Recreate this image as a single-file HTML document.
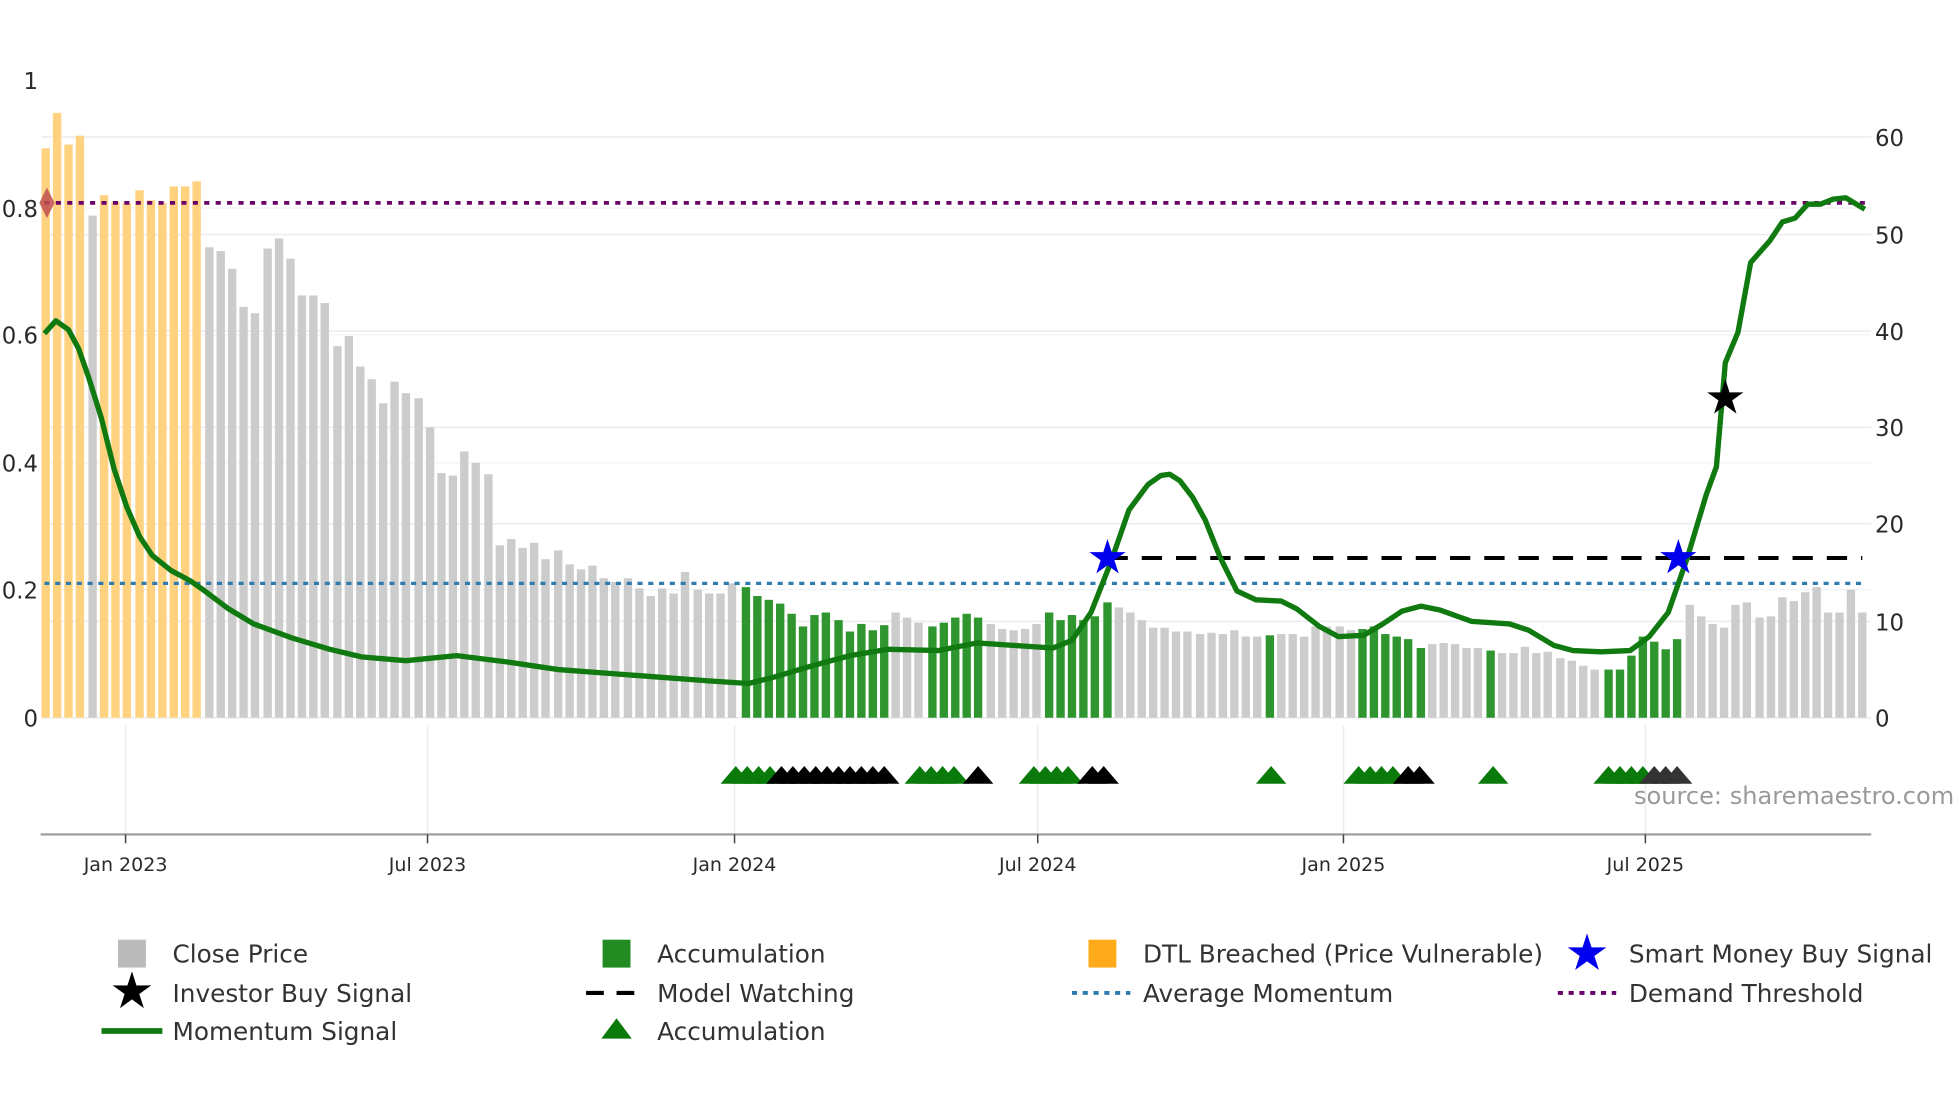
<!DOCTYPE html>
<html><head><meta charset="utf-8"><style>
html,body{margin:0;padding:0;background:#fff;}
svg{display:block;font-family:"DejaVu Sans","Liberation Sans",sans-serif;}
.o{fill:#ffd280}.g{fill:#cccccc}.a{fill:#2f962f}
</style></head><body>
<svg width="1960" height="1102" viewBox="0 0 1545 869" preserveAspectRatio="none" xmlns="http://www.w3.org/2000/svg">
<defs>
<path id="st" d="M0,-1 L0.223,-0.307 L0.951,-0.309 L0.361,0.117 L0.588,0.809 L0,0.38 L-0.588,0.809 L-0.361,0.117 L-0.951,-0.309 L-0.223,-0.307Z"/>
<path id="tr" d="M-12,618 L0,604 L12,618Z"/>
</defs>
<rect width="1545" height="869" fill="#fff"/>
<!-- grid -->
<g stroke="#ececf0" stroke-width="1.2">
<line x1="33" x2="1475" y1="108" y2="108"/><line x1="33" x2="1475" y1="185" y2="185"/>
<line x1="33" x2="1475" y1="261" y2="261"/><line x1="33" x2="1475" y1="337" y2="337"/>
<line x1="33" x2="1475" y1="413" y2="413"/><line x1="33" x2="1475" y1="490" y2="490"/>
<line x1="33" x2="1475" y1="164" y2="164" stroke="#f4f4f6"/><line x1="33" x2="1475" y1="264" y2="264" stroke="#f4f4f6"/>
<line x1="33" x2="1475" y1="365" y2="365" stroke="#f4f4f6"/><line x1="33" x2="1475" y1="465" y2="465" stroke="#f4f4f6"/>
<line x1="33" x2="1475" y1="566" y2="566"/>
<line x1="99" x2="99" y1="572" y2="658"/><line x1="337" x2="337" y1="572" y2="658"/>
<line x1="579" x2="579" y1="572" y2="658"/><line x1="818" x2="818" y1="572" y2="658"/>
<line x1="1059" x2="1059" y1="572" y2="658"/><line x1="1297" x2="1297" y1="572" y2="658"/>
</g>
<!-- bars -->
<g>
<rect class="o" x="32.7" y="117" width="6.6" height="449"/><rect class="o" x="41.7" y="89" width="6.6" height="477"/><rect class="o" x="50.7" y="114" width="6.6" height="452"/><rect class="o" x="59.7" y="107" width="6.6" height="459"/>
<rect class="g" x="69.7" y="170" width="6.6" height="396"/>
<rect class="o" x="78.7" y="154" width="6.6" height="412"/><rect class="o" x="87.7" y="159" width="6.6" height="407"/><rect class="o" x="96.7" y="160" width="6.6" height="406"/><rect class="o" x="106.7" y="150" width="6.6" height="416"/><rect class="o" x="115.7" y="158" width="6.6" height="408"/><rect class="o" x="124.7" y="160" width="6.6" height="406"/><rect class="o" x="133.7" y="147" width="6.6" height="419"/><rect class="o" x="142.7" y="147" width="6.6" height="419"/><rect class="o" x="151.7" y="143" width="6.6" height="423"/>
<rect class="g" x="161.7" y="195" width="6.6" height="371"/><rect class="g" x="170.7" y="198" width="6.6" height="368"/><rect class="g" x="179.7" y="212" width="6.6" height="354"/><rect class="g" x="188.7" y="242" width="6.6" height="324"/><rect class="g" x="197.7" y="247" width="6.6" height="319"/><rect class="g" x="207.7" y="196" width="6.6" height="370"/><rect class="g" x="216.7" y="188" width="6.6" height="378"/><rect class="g" x="225.7" y="204" width="6.6" height="362"/><rect class="g" x="234.7" y="233" width="6.6" height="333"/><rect class="g" x="243.7" y="233" width="6.6" height="333"/><rect class="g" x="252.7" y="239" width="6.6" height="327"/><rect class="g" x="262.7" y="273" width="6.6" height="293"/><rect class="g" x="271.7" y="265" width="6.6" height="301"/><rect class="g" x="280.7" y="289" width="6.6" height="277"/><rect class="g" x="289.7" y="299" width="6.6" height="267"/><rect class="g" x="298.7" y="318" width="6.6" height="248"/><rect class="g" x="307.7" y="301" width="6.6" height="265"/><rect class="g" x="316.7" y="310" width="6.6" height="256"/><rect class="g" x="326.7" y="314" width="6.6" height="252"/><rect class="g" x="335.7" y="337" width="6.6" height="229"/><rect class="g" x="344.7" y="373" width="6.6" height="193"/><rect class="g" x="353.7" y="375" width="6.6" height="191"/><rect class="g" x="362.7" y="356" width="6.6" height="210"/><rect class="g" x="371.7" y="365" width="6.6" height="201"/><rect class="g" x="381.7" y="374" width="6.6" height="192"/><rect class="g" x="390.7" y="430" width="6.6" height="136"/><rect class="g" x="399.7" y="425" width="6.6" height="141"/><rect class="g" x="408.7" y="432" width="6.6" height="134"/><rect class="g" x="417.7" y="428" width="6.6" height="138"/><rect class="g" x="426.7" y="441" width="6.6" height="125"/><rect class="g" x="436.7" y="434" width="6.6" height="132"/><rect class="g" x="445.7" y="445" width="6.6" height="121"/><rect class="g" x="454.7" y="449" width="6.6" height="117"/><rect class="g" x="463.7" y="446" width="6.6" height="120"/><rect class="g" x="472.7" y="456" width="6.6" height="110"/><rect class="g" x="481.7" y="459" width="6.6" height="107"/><rect class="g" x="491.7" y="456" width="6.6" height="110"/><rect class="g" x="500.7" y="464" width="6.6" height="102"/><rect class="g" x="509.7" y="470" width="6.6" height="96"/><rect class="g" x="518.7" y="464" width="6.6" height="102"/><rect class="g" x="527.7" y="468" width="6.6" height="98"/><rect class="g" x="536.7" y="451" width="6.6" height="115"/><rect class="g" x="546.7" y="465" width="6.6" height="101"/><rect class="g" x="555.7" y="468" width="6.6" height="98"/><rect class="g" x="564.7" y="468" width="6.6" height="98"/><rect class="g" x="573.7" y="460" width="6.6" height="106"/>
<rect class="a" x="584.7" y="463" width="6.6" height="103"/><rect class="a" x="593.7" y="470" width="6.6" height="96"/><rect class="a" x="602.7" y="473" width="6.6" height="93"/><rect class="a" x="611.7" y="476" width="6.6" height="90"/><rect class="a" x="620.7" y="484" width="6.6" height="82"/><rect class="a" x="629.7" y="494" width="6.6" height="72"/><rect class="a" x="638.7" y="485" width="6.6" height="81"/><rect class="a" x="647.7" y="483" width="6.6" height="83"/><rect class="a" x="657.7" y="489" width="6.6" height="77"/><rect class="a" x="666.7" y="498" width="6.6" height="68"/><rect class="a" x="675.7" y="492" width="6.6" height="74"/><rect class="a" x="684.7" y="497" width="6.6" height="69"/><rect class="a" x="693.7" y="493" width="6.6" height="73"/>
<rect class="g" x="702.7" y="483" width="6.6" height="83"/><rect class="g" x="711.7" y="487" width="6.6" height="79"/><rect class="g" x="720.7" y="491" width="6.6" height="75"/>
<rect class="a" x="731.7" y="494" width="6.6" height="72"/><rect class="a" x="740.7" y="491" width="6.6" height="75"/><rect class="a" x="749.7" y="487" width="6.6" height="79"/><rect class="a" x="758.7" y="484" width="6.6" height="82"/><rect class="a" x="767.7" y="487" width="6.6" height="79"/>
<rect class="g" x="777.7" y="492" width="6.6" height="74"/><rect class="g" x="786.7" y="496" width="6.6" height="70"/><rect class="g" x="795.7" y="497" width="6.6" height="69"/><rect class="g" x="804.7" y="496" width="6.6" height="70"/><rect class="g" x="813.7" y="492" width="6.6" height="74"/>
<rect class="a" x="823.7" y="483" width="6.6" height="83"/><rect class="a" x="832.7" y="489" width="6.6" height="77"/><rect class="a" x="841.7" y="485" width="6.6" height="81"/><rect class="a" x="850.7" y="489" width="6.6" height="77"/><rect class="a" x="859.7" y="486" width="6.6" height="80"/><rect class="a" x="869.7" y="475" width="6.6" height="91"/>
<rect class="g" x="878.7" y="479" width="6.6" height="87"/><rect class="g" x="887.7" y="483" width="6.6" height="83"/><rect class="g" x="896.7" y="489" width="6.6" height="77"/><rect class="g" x="905.7" y="495" width="6.6" height="71"/><rect class="g" x="914.7" y="495" width="6.6" height="71"/><rect class="g" x="923.7" y="498" width="6.6" height="68"/><rect class="g" x="932.7" y="498" width="6.6" height="68"/><rect class="g" x="942.7" y="500" width="6.6" height="66"/><rect class="g" x="951.7" y="499" width="6.6" height="67"/><rect class="g" x="960.7" y="500" width="6.6" height="66"/><rect class="g" x="969.7" y="497" width="6.6" height="69"/><rect class="g" x="978.7" y="502" width="6.6" height="64"/><rect class="g" x="987.7" y="502" width="6.6" height="64"/>
<rect class="a" x="997.7" y="501" width="6.6" height="65"/>
<rect class="g" x="1006.7" y="500" width="6.6" height="66"/><rect class="g" x="1015.7" y="500" width="6.6" height="66"/><rect class="g" x="1024.7" y="502" width="6.6" height="64"/><rect class="g" x="1033.7" y="494" width="6.6" height="72"/><rect class="g" x="1042.7" y="494" width="6.6" height="72"/><rect class="g" x="1052.7" y="494" width="6.6" height="72"/><rect class="g" x="1061.7" y="497" width="6.6" height="69"/>
<rect class="a" x="1070.7" y="496" width="6.6" height="70"/><rect class="a" x="1079.7" y="494" width="6.6" height="72"/><rect class="a" x="1088.7" y="500" width="6.6" height="66"/><rect class="a" x="1097.7" y="502" width="6.6" height="64"/><rect class="a" x="1106.7" y="504" width="6.6" height="62"/><rect class="a" x="1116.7" y="511" width="6.6" height="55"/>
<rect class="g" x="1125.7" y="508" width="6.6" height="58"/><rect class="g" x="1134.7" y="507" width="6.6" height="59"/><rect class="g" x="1143.7" y="508" width="6.6" height="58"/><rect class="g" x="1152.7" y="511" width="6.6" height="55"/><rect class="g" x="1161.7" y="511" width="6.6" height="55"/>
<rect class="a" x="1171.7" y="513" width="6.6" height="53"/>
<rect class="g" x="1180.7" y="515" width="6.6" height="51"/><rect class="g" x="1189.7" y="515" width="6.6" height="51"/><rect class="g" x="1198.7" y="510" width="6.6" height="56"/><rect class="g" x="1207.7" y="515" width="6.6" height="51"/><rect class="g" x="1216.7" y="514" width="6.6" height="52"/><rect class="g" x="1226.7" y="519" width="6.6" height="47"/><rect class="g" x="1235.7" y="521" width="6.6" height="45"/><rect class="g" x="1244.7" y="525" width="6.6" height="41"/><rect class="g" x="1253.7" y="528" width="6.6" height="38"/>
<rect class="a" x="1264.7" y="528" width="6.6" height="38"/><rect class="a" x="1273.7" y="528" width="6.6" height="38"/><rect class="a" x="1282.7" y="517" width="6.6" height="49"/><rect class="a" x="1291.7" y="502" width="6.6" height="64"/><rect class="a" x="1300.7" y="506" width="6.6" height="60"/><rect class="a" x="1309.7" y="512" width="6.6" height="54"/><rect class="a" x="1318.7" y="504" width="6.6" height="62"/>
<rect class="g" x="1328.7" y="477" width="6.6" height="89"/><rect class="g" x="1337.7" y="486" width="6.6" height="80"/><rect class="g" x="1346.7" y="492" width="6.6" height="74"/><rect class="g" x="1355.7" y="495" width="6.6" height="71"/><rect class="g" x="1364.7" y="477" width="6.6" height="89"/><rect class="g" x="1373.7" y="475" width="6.6" height="91"/><rect class="g" x="1383.7" y="487" width="6.6" height="79"/><rect class="g" x="1392.7" y="486" width="6.6" height="80"/><rect class="g" x="1401.7" y="471" width="6.6" height="95"/><rect class="g" x="1410.7" y="474" width="6.6" height="92"/><rect class="g" x="1419.7" y="467" width="6.6" height="99"/><rect class="g" x="1428.7" y="463" width="6.6" height="103"/><rect class="g" x="1437.7" y="483" width="6.6" height="83"/><rect class="g" x="1446.7" y="483" width="6.6" height="83"/><rect class="g" x="1455.7" y="465" width="6.6" height="101"/><rect class="g" x="1464.7" y="483" width="6.6" height="83"/>
</g>
<!-- horizontal reference lines -->
<line x1="35" x2="1470" y1="160" y2="160" stroke="#6a006a" stroke-width="3" stroke-dasharray="4,5"/>
<line x1="35" x2="1470" y1="460" y2="460" stroke="#2e7bb0" stroke-width="2.6" stroke-dasharray="4,4.5"/>
<line x1="873" x2="1468" y1="440" y2="440" stroke="#000" stroke-width="3.2" stroke-dasharray="16,11"/>
<path d="M37,148 L31,160 L37,172 L43,160Z" fill="#c0504d" opacity="0.85"/>
<!-- momentum line -->
<polyline fill="none" stroke="#107a10" stroke-width="4.2" stroke-linejoin="round" points="35,263 44,253 54,260 62,275 70,298 80,330 90,370 100,400 110,423 120,438 135,450 150,458 160,465 180,480 200,492 230,503 260,512 285,518 320,521 360,517 400,522 440,528 480,531 520,534 560,537 590,539 610,534 640,525 670,517 700,512 740,513 770,507 800,509 830,511 845,505 860,483 875,445 890,402 905,382 915,375 922,374 930,379 940,392 950,410 962,440 975,466 990,473 1010,474 1022,480 1040,494 1055,502 1075,501 1090,492 1105,482 1120,478 1135,481 1160,490 1190,492 1205,497 1225,509 1240,513 1262,514 1285,513 1300,502 1315,483 1330,440 1345,390 1353,368 1360,286 1370,262 1380,207 1395,190 1405,175 1415,172 1425,161 1435,161 1445,157 1455,156 1470,165"/>
<!-- stars -->
<use href="#st" transform="translate(873,440) scale(15)" fill="#0000ee"/>
<use href="#st" transform="translate(1323,440) scale(15)" fill="#0000ee"/>
<use href="#st" transform="translate(1360,314) scale(15)" fill="#000"/>
<!-- triangles -->
<g fill="#0a7a0a">
<use href="#tr" x="580"/><use href="#tr" x="589"/><use href="#tr" x="598"/><use href="#tr" x="607"/>
<use href="#tr" x="725"/><use href="#tr" x="734"/><use href="#tr" x="743"/><use href="#tr" x="752"/>
<use href="#tr" x="815"/><use href="#tr" x="824"/><use href="#tr" x="833"/><use href="#tr" x="842"/>
<use href="#tr" x="1002"/>
<use href="#tr" x="1071"/><use href="#tr" x="1080"/><use href="#tr" x="1089"/><use href="#tr" x="1098"/>
<use href="#tr" x="1177"/>
<use href="#tr" x="1268"/><use href="#tr" x="1277"/><use href="#tr" x="1286"/><use href="#tr" x="1295"/>
</g>
<g fill="#000">
<use href="#tr" x="616"/><use href="#tr" x="625"/><use href="#tr" x="634"/><use href="#tr" x="643"/><use href="#tr" x="652"/><use href="#tr" x="661"/><use href="#tr" x="670"/><use href="#tr" x="679"/><use href="#tr" x="688"/><use href="#tr" x="697"/>
<use href="#tr" x="771"/>
<use href="#tr" x="861"/><use href="#tr" x="870"/>
<use href="#tr" x="1110"/><use href="#tr" x="1119"/>
<use href="#tr" x="1304" fill="#333"/><use href="#tr" x="1313" fill="#333"/><use href="#tr" x="1322" fill="#333"/>
</g>
<!-- axes -->
<line x1="32" x2="1475" y1="658" y2="658" stroke="#999" stroke-width="1.6"/>
<g stroke="#444" stroke-width="1.2">
<line x1="99" x2="99" y1="658" y2="665"/><line x1="337" x2="337" y1="658" y2="665"/><line x1="579" x2="579" y1="658" y2="665"/>
<line x1="818" x2="818" y1="658" y2="665"/><line x1="1059" x2="1059" y1="658" y2="665"/><line x1="1297" x2="1297" y1="658" y2="665"/>
</g>
<g fill="#2a2a2a" font-size="15" text-anchor="middle">
<text x="99" y="687">Jan 2023</text><text x="337" y="687">Jul 2023</text><text x="579" y="687">Jan 2024</text>
<text x="818" y="687">Jul 2024</text><text x="1059" y="687">Jan 2025</text><text x="1297" y="687">Jul 2025</text>
</g>
<g fill="#2a2a2a" font-size="18" text-anchor="end">
<text x="30" y="70">1</text><text x="30" y="171">0.8</text><text x="30" y="271">0.6</text>
<text x="30" y="372">0.4</text><text x="30" y="472">0.2</text><text x="30" y="573">0</text>
</g>
<g fill="#2a2a2a" font-size="18">
<text x="1478" y="115">60</text><text x="1478" y="192">50</text><text x="1478" y="268">40</text>
<text x="1478" y="344">30</text><text x="1478" y="420">20</text><text x="1478" y="497">10</text><text x="1478" y="573">0</text>
</g>
<text x="1288" y="634" fill="#9a9a9a" font-size="19">source: sharemaestro.com</text>
<!-- legend -->
<g fill="#333" font-size="19.5">
<text x="136" y="759">Close Price</text><text x="136" y="790">Investor Buy Signal</text><text x="136" y="820">Momentum Signal</text>
<text x="518" y="759">Accumulation</text><text x="518" y="790">Model Watching</text><text x="518" y="820">Accumulation</text>
<text x="901" y="759">DTL Breached (Price Vulnerable)</text><text x="901" y="790">Average Momentum</text>
<text x="1284" y="759">Smart Money Buy Signal</text><text x="1284" y="790">Demand Threshold</text>
</g>
<rect x="93" y="741" width="22" height="22" fill="#bbbbbb"/>
<use href="#st" transform="translate(104,782) scale(16)" fill="#000"/>
<line x1="80" x2="128" y1="813" y2="813" stroke="#107a10" stroke-width="4.5"/>
<rect x="475" y="741" width="22" height="22" fill="#228b22"/>
<line x1="462" x2="508" y1="783" y2="783" stroke="#000" stroke-width="3.2" stroke-dasharray="14,10"/>
<path d="M474,819 L486,803 L498,819Z" fill="#0a7a0a"/>
<rect x="858" y="741" width="22" height="22" fill="#ffaa1a"/>
<line x1="845" x2="891" y1="783" y2="783" stroke="#2e7bb0" stroke-width="3" stroke-dasharray="4,4.5"/>
<use href="#st" transform="translate(1251,752) scale(16)" fill="#0000ee"/>
<line x1="1228" x2="1274" y1="783" y2="783" stroke="#6a006a" stroke-width="3" stroke-dasharray="4,4.5"/>
</svg>
</body></html>
